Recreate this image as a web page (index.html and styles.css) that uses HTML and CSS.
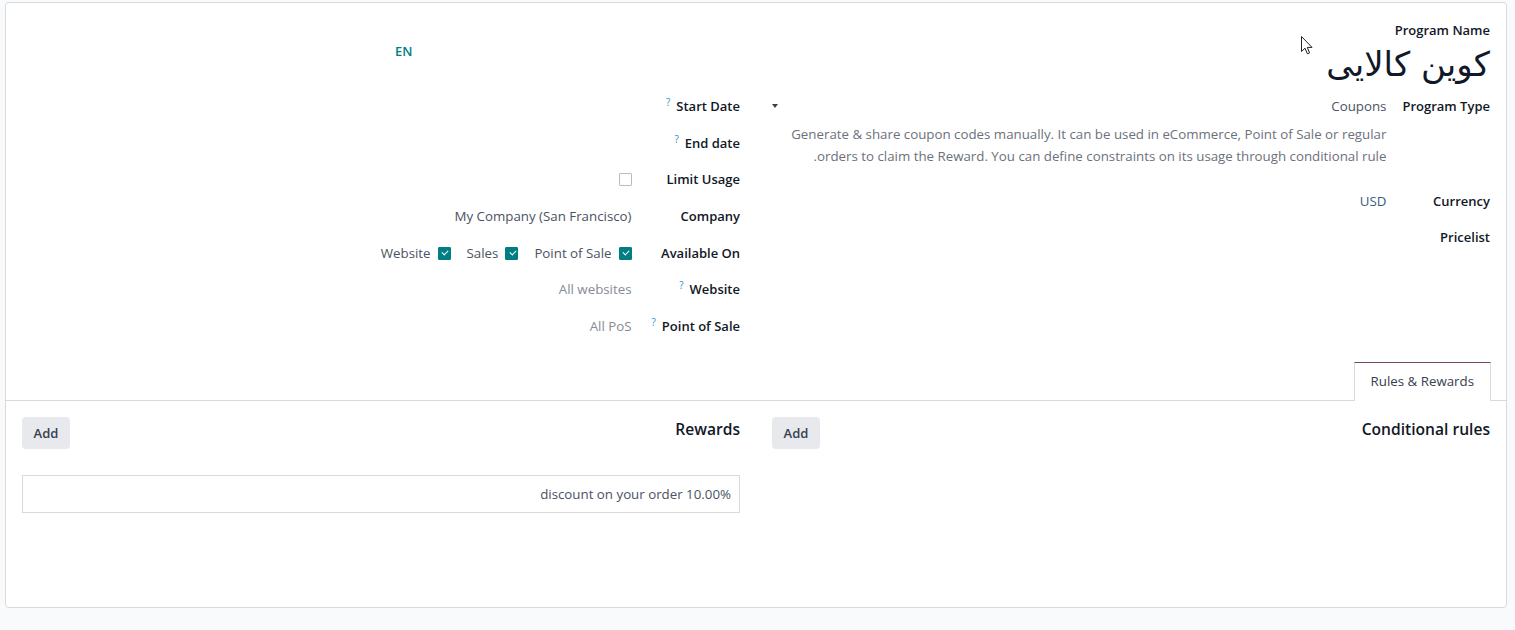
FILE: index.html
```html
<!DOCTYPE html>
<html lang="fa" dir="rtl">
<head>
<meta charset="utf-8">
<title>Coupon Program</title>
<link rel="stylesheet" href="styles.css">
</head>
<body>
<div class="sheet">
  <div class="title">
    <div class="title-label">Program Name</div>
    <div class="title-row">
      <div class="title-name">کوین کالایی</div>
      <span class="lang">EN</span>
    </div>
    <svg class="cursor" width="12" height="19" viewBox="0 0 12 19"><path d="M0.5 0.5 L0.5 15.5 L4 12.2 L6.4 17.8 L8.6 16.9 L6.3 11.4 L11 11.4 Z" fill="#fff" stroke="#222" stroke-width="1" stroke-linejoin="round"/></svg>
  </div>

  <div class="groups">
    <div class="inner">
      <div class="lbl">Program Type</div>
      <div class="val">
        <div class="select"><span>Coupons</span><span class="caret"></span></div>
        <div class="desc">Generate &amp; share coupon codes manually. It can be used in eCommerce, Point of Sale or regular<br>orders to claim the Reward. You can define constraints on its usage through conditional rule.</div>
      </div>
      <div class="lbl">Currency</div>
      <div class="val link">USD</div>
      <div class="lbl">Pricelist</div>
      <div class="val"></div>
    </div>

    <div class="inner inner-wide">
      <div class="lbl">Start Date<sup class="help">?</sup></div>
      <div class="val"></div>
      <div class="lbl">End date<sup class="help">?</sup></div>
      <div class="val"></div>
      <div class="lbl">Limit Usage</div>
      <div class="val"><span class="cb"></span></div>
      <div class="lbl">Company</div>
      <div class="val"><bdi>My Company (San Francisco)</bdi></div>
      <div class="lbl">Available On</div>
      <div class="val">
        <div class="checks">
          <span class="chk"><span class="cb on"></span>Point of Sale</span>
          <span class="chk"><span class="cb on"></span>Sales</span>
          <span class="chk"><span class="cb on"></span>Website</span>
        </div>
      </div>
      <div class="lbl">Website<sup class="help">?</sup></div>
      <div class="val muted">All websites</div>
      <div class="lbl">Point of Sale<sup class="help">?</sup></div>
      <div class="val muted">All PoS</div>
    </div>
  </div>

  <div class="notebook">
    <div class="tab">Rules &amp; Rewards</div>
  </div>

  <div class="tabpane">
    <div class="half">
      <div class="half-head">
        <h3>Conditional rules</h3>
        <button class="btn">Add</button>
      </div>
    </div>
    <div class="half">
      <div class="half-head">
        <h3>Rewards</h3>
        <button class="btn">Add</button>
      </div>
      <div class="reward"><bdi>discount on your order 10.00%</bdi></div>
    </div>
  </div>
</div>
</body>
</html>
```

FILE: styles.css
```css
html, body {
  margin: 0;
  padding: 0;
}
body {
  background: #f9fafb;
  font-family: "Open Sans", "DejaVu Sans", sans-serif;
  font-size: 13px;
  color: #374151;
  padding: 2px 8px 0 5px;
}
.sheet {
  position: relative;
  background: #fff;
  border: 1px solid #d8dadd;
  border-radius: 4px;
  height: 606px;
  box-sizing: border-box;
  padding: 0 16px;
}
.title {
  padding-top: 17px;
  width: 1095px;
}
.title-label {
  font-weight: 600;
  color: #111827;
  line-height: 20px;
}
.title-row {
  display: flex;
  justify-content: space-between;
  align-items: flex-start;
}
.title-name {
  font-family: "DejaVu Sans", sans-serif;
  font-size: 34px;
  line-height: 48px;
  color: #111827;
}
.lang {
  color: #017e84;
  font-weight: 600;
  margin-top: 2px;
}
.cursor {
  position: absolute;
  top: 33px;
  left: 1295px;
}
.groups {
  display: grid;
  grid-template-columns: 1fr 1fr;
  column-gap: 32px;
}
.inner {
  display: grid;
  grid-template-columns: max-content 1fr;
  align-content: start;
}
.lbl {
  font-weight: 600;
  color: #111827;
  line-height: 20.67px;
  padding: 8px 0;
  padding-inline-end: 16px;
  white-space: nowrap;
}
.inner-wide .lbl {
  padding-inline-end: 20px;
}
.val {
  font-size: 13.3px;
  line-height: 20.67px;
  padding: 8px 0;
  color: #4b5263;
}
.help {
  color: #2f8fc9;
  font-size: 10px;
  font-weight: 500;
  margin-inline-start: 6px;
  vertical-align: 5px;
  line-height: 0;
}
.select {
  display: flex;
  justify-content: space-between;
  align-items: center;
}
.caret {
  width: 0;
  height: 0;
  border-left: 3.5px solid transparent;
  border-right: 3.5px solid transparent;
  border-top: 4px solid #374151;
}
.desc {
  color: #6c717c;
  line-height: 22px;
  margin-top: 6px;
  margin-bottom: 8px;
  white-space: nowrap;
}
.link {
  color: #3a5a85;
}
.muted {
  color: #868b94;
}
.cb {
  display: inline-block;
  width: 13px;
  height: 13px;
  box-sizing: border-box;
  border: 1px solid #b9bdc3;
  border-radius: 1px;
  vertical-align: -2px;
  background: #fff;
}
.cb.on {
  background: #017e84;
  border-color: #017e84;
  position: relative;
}
.cb.on::after {
  content: "";
  position: absolute;
  left: 3.5px;
  top: 2.5px;
  width: 5px;
  height: 3px;
  border-left: 1.6px solid #fff;
  border-bottom: 1.6px solid #fff;
  transform: rotate(-45deg);
}
.checks {
  display: flex;
  gap: 16px;
}
.chk {
  display: inline-flex;
  align-items: center;
  gap: 7px;
}
.notebook {
  margin: 17px -17px 0;
  padding: 0 16px;
  border-bottom: 1px solid #d8dadd;
  display: flex;
}
.tab {
  border: 1px solid #d8dadd;
  border-top-color: #714b67;
  border-bottom: none;
  background: #fff;
  padding: 0 16px;
  font-size: 13.3px;
  line-height: 37px;
  margin-bottom: -1px;
  color: #374151;
  box-sizing: border-box;
  height: 39px;
}
.tabpane {
  display: grid;
  grid-template-columns: 1fr 1fr;
  column-gap: 32px;
  padding-top: 16px;
}
.half-head {
  display: flex;
  justify-content: space-between;
  align-items: flex-start;
}
.half-head h3 {
  margin: 0;
  font-size: 15.6px;
  font-weight: 600;
  line-height: 24px;
  color: #111827;
}
.btn {
  font-family: inherit;
  font-size: 13px;
  font-weight: 600;
  color: #374151;
  background: #e7e9ed;
  border: none;
  border-radius: 4px;
  height: 32px;
  width: 48px;
  padding: 0;
}
.reward {
  margin-top: 26px;
  border: 1px solid #d8dadd;
  height: 38px;
  box-sizing: border-box;
  font-size: 13.3px;
  line-height: 36px;
  padding: 0 8px;
  color: #4b5263;
}
```
